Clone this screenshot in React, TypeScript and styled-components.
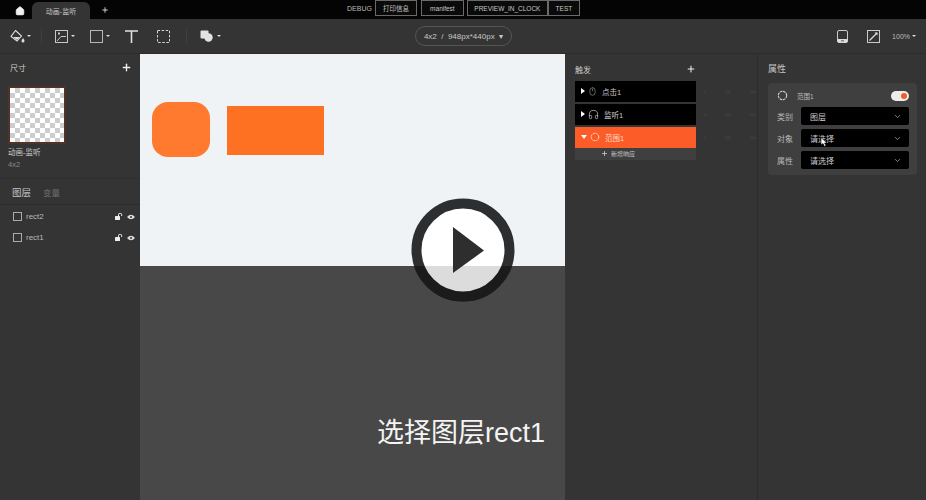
import React from 'react'
import styled, { createGlobalStyle } from 'styled-components'
import { ChevronDown, Headphones, House, Mouse, Plus } from 'lucide-react'

const GlobalStyle = createGlobalStyle`
	html, body {
		margin: 0;
		padding: 0;
		background: #333;
		overflow: hidden;
	}
	* {
		box-sizing: border-box;
	}
`

const Page = styled.div`
	width: 926px;
	height: 500px;
	display: flex;
	flex-direction: column;
	overflow: hidden;
	background: #343434;
	color: #ddd;
	font-family: 'Liberation Sans', 'Noto Sans CJK SC', sans-serif;
`

const TopBar = styled.div`
	position: relative;
	height: 19px;
	flex: none;
	display: flex;
	align-items: flex-end;
	background: #040404;
`

const HomeButton = styled.div`
	width: 32px;
	height: 19px;
	padding: 2px 0 0 8px;
	display: flex;
	justify-content: center;
	align-items: center;
	color: #f2f2f2;
`

const Tab = styled.div`
	width: 58px;
	height: 17px;
	display: flex;
	align-items: center;
	justify-content: center;
	border-radius: 6px 6px 0 0;
	background: #343434;
	font-size: 7px;
	color: #c8c8c8;
`

const AddTab = styled.div`
	width: 30px;
	height: 19px;
	display: flex;
	align-items: center;
	justify-content: center;
	color: #eee;
`

const DebugGroup = styled.div`
	position: absolute;
	left: 347px;
	top: 0;
	height: 16px;
	display: flex;
	align-items: center;
	font-size: 7px;
	color: #bbb;
`

const DebugLabel = styled.span`
	margin-right: 3px;
`

const DebugButton = styled.div<{ $width: number; $gap?: number }>`
	width: ${({ $width }) => $width}px;
	height: 16px;
	margin-right: ${({ $gap }) => $gap ?? 0}px;
	display: flex;
	align-items: center;
	justify-content: center;
	border: 1px solid #6a6a6a;
	background: #0a0a0a;
	font-size: 6.5px;
	color: #c8c8c8;
`

const ToolBar = styled.div`
	position: relative;
	height: 35px;
	flex: none;
	display: flex;
	align-items: center;
	padding: 0 10px;
	background: #343434;
	border-bottom: 1px solid #2c2c2c;
	color: #d8d8d8;
`

const ToolGroup = styled.div<{ $width: number }>`
	width: ${({ $width }) => $width}px;
	display: flex;
	align-items: center;
`

const Tool = styled.div<{ $width: number }>`
	width: ${({ $width }) => $width}px;
	display: flex;
	align-items: center;
`

const Caret = styled.span<{ $gap?: number }>`
	width: 0;
	height: 0;
	margin-left: ${({ $gap }) => $gap ?? 3}px;
	border-left: 2px solid transparent;
	border-right: 2px solid transparent;
	border-top: 2px solid #ddd;
`

const ToolDivider = styled.div`
	width: 1px;
	height: 14px;
	margin-right: 13px;
	background: #404040;
`

const SizePill = styled.div`
	position: absolute;
	left: 415px;
	top: 7px;
	width: 97px;
	height: 20px;
	display: flex;
	align-items: center;
	justify-content: center;
	border: 1px solid #555;
	border-radius: 10px;
	font-size: 8px;
	color: #c8c8c8;
	white-space: pre;
`

const ToolRight = styled.div`
	margin-left: auto;
	display: flex;
	align-items: center;
	font-size: 7px;
	color: #bbb;
`

const ViewIcon = styled.div<{ $width: number }>`
	width: ${({ $width }) => $width}px;
	display: flex;
`

const Body = styled.div`
	flex: 1;
	min-height: 0;
	display: flex;
`

const LeftPanel = styled.div`
	width: 140px;
	flex: none;
	display: flex;
	flex-direction: column;
	background: #343434;
`

const PanelHead = styled.div`
	height: 24px;
	padding: 2px 8px 0 10px;
	display: flex;
	align-items: center;
	justify-content: space-between;
	font-size: 8px;
	color: #ccc;
`

const Thumb = styled.div`
	width: 58px;
	height: 58px;
	margin: 8px 0 0 8px;
	border: 2px solid #4f3328;
	background-color: #fff;
	background-image: conic-gradient(#cdcdcd 25%, #fff 0 50%, #cdcdcd 0 75%, #fff 0);
	background-size: 10px 10px;
`

const ThumbName = styled.div`
	margin: 4px 0 0 8px;
	font-size: 7.5px;
	line-height: 10px;
	color: #c8c8c8;
`

const ThumbSize = styled.div`
	margin: 2px 0 0 8px;
	font-size: 7.5px;
	line-height: 10px;
	color: #8a8a8a;
`

const LayerTabs = styled.div`
	height: 27px;
	margin-top: 8px;
	padding: 0 12px;
	display: flex;
	align-items: center;
	gap: 12px;
	border-top: 1px solid #2f2f2f;
	border-bottom: 1px solid #2c2c2c;
`

const LayerTab = styled.span<{ $active?: boolean }>`
	font-size: ${({ $active }) => ($active ? 9.5 : 8.5)}px;
	color: ${({ $active }) => ($active ? '#c4c4c4' : '#6e6e6e')};
`

const LayerList = styled.div`
	padding-top: 1px;
`

const LayerRow = styled.div`
	height: 21px;
	padding: 0 5px 0 13px;
	display: flex;
	align-items: center;
	font-size: 8px;
	color: #b8b8b8;
`

const LayerBox = styled.span`
	width: 9px;
	height: 9px;
	margin-right: 4px;
	border: 1px solid #aaa;
`

const LayerIcons = styled.span`
	margin-left: auto;
	display: flex;
	align-items: center;
	gap: 4px;
`

const Canvas = styled.div`
	position: relative;
	width: 425px;
	flex: none;
	display: flex;
	flex-direction: column;
	background: #f0f3f5;
`

const Stage = styled.div`
	height: 212px;
	flex: none;
	padding: 48px 0 0 12px;
	display: flex;
	align-items: flex-start;
	gap: 17px;
`

const RoundShape = styled.div`
	width: 58px;
	height: 55px;
	border-radius: 16px;
	background: #ff7a2e;
`

const RectShape = styled.div`
	width: 97px;
	height: 49px;
	margin-top: 4px;
	background: #ff7122;
`

const VideoCaption = styled.div`
	flex: 1;
	padding: 0 20px 50px 0;
	display: flex;
	align-items: flex-end;
	justify-content: flex-end;
	background: #484848;
	font-size: 27px;
	line-height: 34px;
	color: #f4f4f4;
`

const PlayOverlay = styled.svg`
	position: absolute;
	left: 271px;
	top: 144px;
`

const TriggerPanel = styled.div`
	width: 193px;
	flex: none;
	padding-left: 10px;
	background: #343434;
	border-right: 1px solid #2c2c2c;
`

const TriggerHead = styled.div`
	width: 121px;
	height: 27px;
	padding: 3px 0 0 0;
	display: flex;
	align-items: center;
	justify-content: space-between;
	font-size: 8px;
	color: #ccc;
`

const TriggerRow = styled.div`
	display: flex;
	align-items: center;
	margin-bottom: 2.5px;
`

const TriggerCard = styled.div<{ $active?: boolean }>`
	width: 121px;
	height: 20.5px;
	flex: none;
	padding-left: 6px;
	display: flex;
	align-items: center;
	gap: 3px;
	background: ${({ $active }) => ($active ? '#fb5c28' : '#000')};
	font-size: 7.5px;
	color: ${({ $active }) => ($active ? '#ffd9c8' : '#c8c8c8')};
`

const Arrow = styled.span<{ $open?: boolean }>`
	width: 0;
	height: 0;
	${({ $open }) =>
		$open
			? `border-left: 3px solid transparent; border-right: 3px solid transparent; border-top: 4px solid #fff;`
			: `border-top: 3px solid transparent; border-bottom: 3px solid transparent; border-left: 4px solid #fff;`}
`

const TimeMarks = styled.div`
	width: 52px;
	flex: none;
	margin-left: 8px;
	display: flex;
	justify-content: space-between;
	font-size: 4px;
	color: #4b4b4b;
`

const AddResponse = styled.div`
	width: 121px;
	height: 12px;
	margin-top: -2.5px;
	padding-left: 26px;
	display: flex;
	align-items: center;
	gap: 3px;
	background: #3f3f3f;
	font-size: 6px;
	color: #c4c4c4;
`

const PropertyPanel = styled.div`
	flex: 1;
	padding: 0 9px 0 10px;
	background: #343434;
`

const PropertyHead = styled.div`
	height: 29px;
	display: flex;
	align-items: center;
	font-size: 9px;
	color: #c4c4c4;
`

const PropertyCard = styled.div`
	height: 92px;
	padding: 3px 8px 0 9px;
	border-radius: 4px;
	background: #3f3f3f;
`

const CardHead = styled.div`
	height: 19px;
	display: flex;
	align-items: center;
	font-size: 6.5px;
	color: #bbb;
`

const CardTitle = styled.span`
	margin-left: 9px;
`

const Toggle = styled.span`
	width: 18px;
	height: 10px;
	margin-left: auto;
	padding: 2px;
	display: flex;
	justify-content: flex-end;
	border-radius: 5px;
	background: #f0ece8;
`

const ToggleKnob = styled.span`
	width: 6px;
	height: 6px;
	border-radius: 50%;
	background: #ec5f2a;
`

const FieldRow = styled.div`
	height: 22px;
	display: flex;
	align-items: center;
	font-size: 8px;
	color: #b8b8b8;
`

const FieldLabel = styled.span`
	width: 24px;
	flex: none;
`

const FieldSelect = styled.div`
	position: relative;
	width: 108px;
	height: 18px;
	padding: 0 7px 0 9px;
	display: flex;
	align-items: center;
	justify-content: space-between;
	border-radius: 2px;
	background: #000;
	color: #ccc;
`

const Cursor = styled.svg`
	position: absolute;
	left: 19px;
	top: 8px;
`

const PlayButton = () => (
	<PlayOverlay width="104" height="104" viewBox="0 0 104 104">
		<defs>
			<clipPath id="lower-half">
				<rect x="0" y="68" width="104" height="36" />
			</clipPath>
		</defs>
		<circle cx="52" cy="52" r="46.5" fill="#fff" stroke="#2c2e2f" strokeWidth="10" />
		<g clipPath="url(#lower-half)">
			<circle cx="52" cy="52" r="46.5" fill="#dcdcdc" stroke="#1b1b1b" strokeWidth="10" />
		</g>
		<path d="M42 29 L73 52.5 L42 75 Z" fill="#2e2e2e" />
	</PlayOverlay>
)

function RangeIcon({ size, color }: { size: number; color: string }) {
	return (
		<svg width={size} height={size} viewBox="0 0 10 10">
			<circle cx="5" cy="5" r="3.8" fill="none" stroke={color} strokeWidth="1" strokeDasharray="2.4 0.6" />
		</svg>
	)
}

const BucketIcon = () => (
	<svg width="15" height="14" viewBox="0 0 15 14">
		<path d="M5.5 1.5 L11.5 7 L7 12 L1 7.5 Z" fill="none" stroke="#ddd" strokeWidth="1.1" />
		<path d="M3 8 L10 8 L7 11 Z" fill="#ddd" />
		<path d="M13 9 q1.5 2 1.5 3 a1.5 1.5 0 0 1 -3 0 q0 -1 1.5 -3 Z" fill="#ddd" />
	</svg>
)

const LockIcon = () => (
	<svg width="8" height="7" viewBox="0 0 8 7">
		<rect x="0" y="3" width="5" height="4" rx="0.5" fill="#eee" />
		<path d="M3.5 3 V1.8 a1.6 1.6 0 0 1 3.2 0 V3" fill="none" stroke="#eee" strokeWidth="1" />
	</svg>
)

const EyeIcon = () => (
	<svg width="8" height="6" viewBox="0 0 8 6">
		<path d="M0 3 Q4 -1.5 8 3 Q4 7.5 0 3 Z" fill="#ddd" />
		<circle cx="4" cy="3" r="1" fill="#343434" />
	</svg>
)

const triggers = [
	{ name: '点击1', icon: <Mouse size={9} strokeWidth={1.3} /> },
	{ name: '监听1', icon: <Headphones size={11} strokeWidth={1.6} /> },
	{ name: '范围1', icon: <RangeIcon size={10} color="#ffd9c8" />, active: true },
]

const fields = [
	{ label: '类别', value: '图层' },
	{ label: '对象', value: '请选择', cursor: true },
	{ label: '属性', value: '请选择' },
]

export default function App() {
	return (
		<Page>
			<GlobalStyle />
			<TopBar>
				<HomeButton>
					<House size={10} fill="currentColor" />
				</HomeButton>
				<Tab>动画-监听</Tab>
				<AddTab>
					<Plus size={8} strokeWidth={2.5} />
				</AddTab>
				<DebugGroup>
					<DebugLabel>DEBUG</DebugLabel>
					<DebugButton $width={42} $gap={4}>
						打印信息
					</DebugButton>
					<DebugButton $width={43} $gap={3}>
						manifest
					</DebugButton>
					<DebugButton $width={81}>PREVIEW_IN_CLOCK</DebugButton>
					<DebugButton $width={32}>TEST</DebugButton>
				</DebugGroup>
			</TopBar>
			<ToolBar>
				<ToolGroup $width={31}>
					<BucketIcon />
					<Caret $gap={2} />
				</ToolGroup>
				<ToolDivider />
				<Tool $width={35}>
					<svg width="13" height="13" viewBox="0 0 13 13">
						<rect x="0.5" y="0.5" width="12" height="12" fill="none" stroke="#c8c8c8" />
						<path d="M2 11 L6 6.5 L11 6.5" fill="none" stroke="#c8c8c8" />
						<rect x="3" y="2.5" width="2" height="2" fill="#c8c8c8" />
					</svg>
					<Caret />
				</Tool>
				<Tool $width={35}>
					<svg width="13" height="13" viewBox="0 0 13 13">
						<rect x="0.5" y="0.5" width="12" height="12" fill="none" stroke="#b8b8b8" />
					</svg>
					<Caret />
				</Tool>
				<Tool $width={32}>
					<svg width="13" height="13" viewBox="0 0 13 13">
						<path d="M0 1 H13 M6.5 1 V13" fill="none" stroke="#e0e0e0" strokeWidth="1.6" />
					</svg>
				</Tool>
				<Tool $width={29}>
					<svg width="13" height="13" viewBox="0 0 13 13">
						<rect x="0.5" y="0.5" width="12" height="12" fill="none" stroke="#d8d8d8" strokeDasharray="2.5 1.6" />
					</svg>
				</Tool>
				<ToolDivider />
				<Tool $width={30}>
					<svg width="14" height="12" viewBox="0 0 14 12">
						<rect x="0.5" y="0.5" width="8" height="8" rx="1" fill="#e2e2e2" />
						<circle cx="8.5" cy="7.5" r="4.2" fill="#e2e2e2" />
					</svg>
					<Caret />
				</Tool>
				<SizePill>4x2  /  948px*440px  ▾</SizePill>
				<ToolRight>
					<ViewIcon $width={30}>
						<svg width="11" height="13" viewBox="0 0 11 13">
							<rect x="0.5" y="0.5" width="10" height="12" rx="1.5" fill="none" stroke="#ccc" />
							<rect x="0.5" y="9" width="10" height="3.5" rx="1" fill="#ddd" />
							<path d="M4 10.8 H7" stroke="#444" strokeWidth="0.8" />
						</svg>
					</ViewIcon>
					<ViewIcon $width={25}>
						<svg width="13" height="13" viewBox="0 0 13 13">
							<rect x="0.5" y="0.5" width="12" height="12" fill="none" stroke="#ccc" />
							<path d="M2.5 10.5 L10 3" stroke="#ddd" strokeWidth="1.2" />
							<path d="M7.5 2.5 H10.5 V5.5 Z" fill="#ddd" />
						</svg>
					</ViewIcon>
					100%
					<Caret $gap={2} />
				</ToolRight>
			</ToolBar>
			<Body>
				<LeftPanel>
					<PanelHead>
						尺寸
						<Plus size={11} strokeWidth={3} color="#eee" />
					</PanelHead>
					<Thumb />
					<ThumbName>动画-监听</ThumbName>
					<ThumbSize>4x2</ThumbSize>
					<LayerTabs>
						<LayerTab $active>图层</LayerTab>
						<LayerTab>变量</LayerTab>
					</LayerTabs>
					<LayerList>
						{['rect2', 'rect1'].map((name) => (
							<LayerRow key={name}>
								<LayerBox />
								{name}
								<LayerIcons>
									<LockIcon />
									<EyeIcon />
								</LayerIcons>
							</LayerRow>
						))}
					</LayerList>
				</LeftPanel>
				<Canvas>
					<Stage>
						<RoundShape />
						<RectShape />
					</Stage>
					<VideoCaption>选择图层rect1</VideoCaption>
					<PlayButton />
				</Canvas>
				<TriggerPanel>
					<TriggerHead>
						触发
						<Plus size={10} strokeWidth={2.5} color="#eee" />
					</TriggerHead>
					{triggers.map((t) => (
						<TriggerRow key={t.name}>
							<TriggerCard $active={t.active}>
								<Arrow $open={t.active} />
								{t.icon}
								<span>&nbsp;{t.name}</span>
							</TriggerCard>
							<TimeMarks>
								<span>0</span>
								<span>100</span>
								<span>200</span>
							</TimeMarks>
						</TriggerRow>
					))}
					<AddResponse>
						<Plus size={7} strokeWidth={3} />
						新增响应
					</AddResponse>
				</TriggerPanel>
				<PropertyPanel>
					<PropertyHead>属性</PropertyHead>
					<PropertyCard>
						<CardHead>
							<RangeIcon size={11} color="#d0d0d0" />
							<CardTitle>范围1</CardTitle>
							<Toggle>
								<ToggleKnob />
							</Toggle>
						</CardHead>
						{fields.map((f) => (
							<FieldRow key={f.label}>
								<FieldLabel>{f.label}</FieldLabel>
								<FieldSelect>
									{f.value}
									<ChevronDown size={9} color="#aaa" />
									{f.cursor && (
										<Cursor width="8" height="10" viewBox="0 0 8 10">
											<path d="M1 0.5 L1 8 L3 6.5 L4.5 9.5 L6 8.8 L4.6 6 L7 6 Z" fill="#fff" stroke="#000" strokeWidth="0.6" />
										</Cursor>
									)}
								</FieldSelect>
							</FieldRow>
						))}
					</PropertyCard>
				</PropertyPanel>
			</Body>
		</Page>
	)
}
